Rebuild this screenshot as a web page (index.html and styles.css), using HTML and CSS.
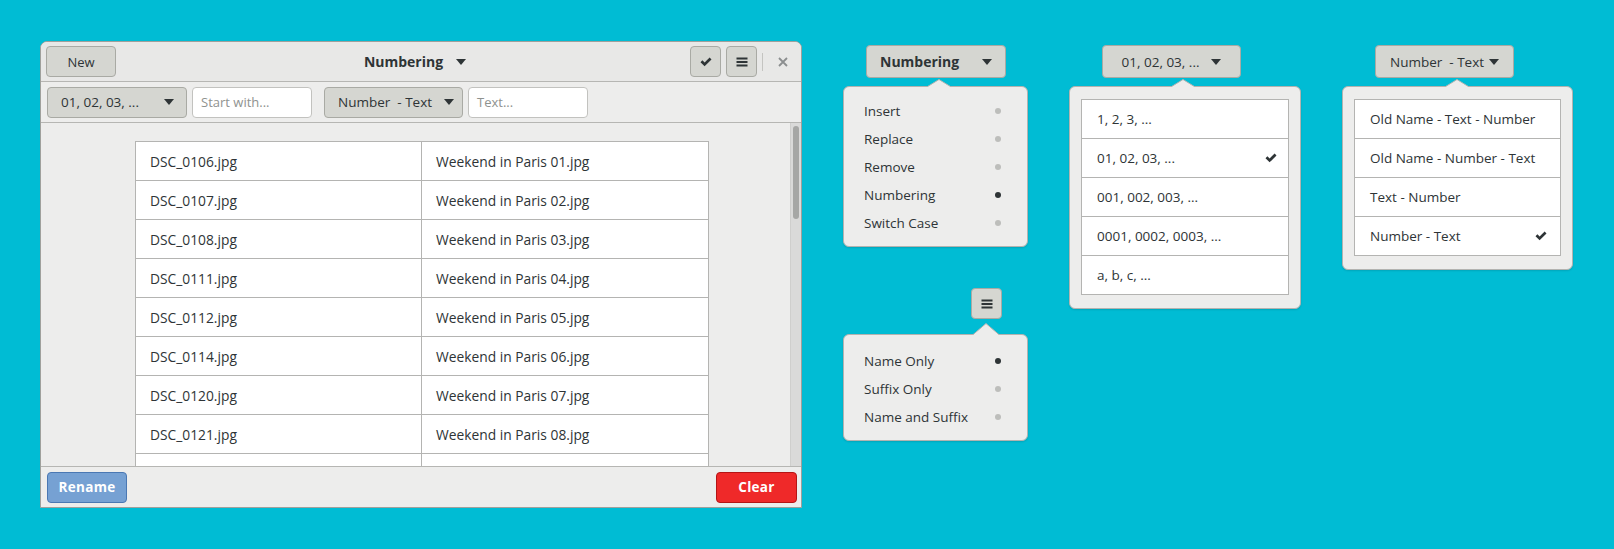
FILE: index.html
```html
<!DOCTYPE html>
<html>
<head>
<meta charset="utf-8">
<link rel="stylesheet" href="styles.css">
</head>
<body>
<div class="stage">
  <div class="window">
    <header class="headerbar">
      <div class="hb-left"><button class="btn btn-new">New</button></div>
      <div class="hb-title">Numbering <svg class="tri" width="10" height="6" viewBox="0 0 10 6"><path d="M0 0h10L5 6z"/></svg></div>
      <div class="hb-right">
        <button class="btn btn-icon"><svg width="12" height="10" viewBox="0 0 12 10"><path d="M0.5 5.2l1.9-1.9 2.2 2.2L9.6 0.5l1.9 1.9-6.9 6.9z"/></svg></button>
        <button class="btn btn-icon"><svg width="12" height="10" viewBox="0 0 12 10"><path d="M0.5 0.5h11v2h-11zM0.5 4h11v2h-11zM0.5 7.5h11v2h-11z"/></svg></button>
        <span class="sep"></span>
        <span class="close"><svg width="10" height="10" viewBox="0 0 10 10"><path d="M1 1l8 8M9 1l-8 8" stroke="#8b8e8f" stroke-width="1.8"/></svg></span>
      </div>
    </header>
    <div class="toolbar">
      <button class="btn combo combo-num">01, 02, 03, ... <svg class="tri" width="10" height="6" viewBox="0 0 10 6"><path d="M0 0h10L5 6z"/></svg></button>
      <div class="entry">Start with...</div>
      <button class="btn combo combo-fmt">Number&nbsp; - Text <svg class="tri" width="10" height="6" viewBox="0 0 10 6"><path d="M0 0h10L5 6z"/></svg></button>
      <div class="entry">Text...</div>
    </div>
    <div class="content">
      <div class="scroll-area">
        <div class="filetable">
          <div class="row"><div class="cell">DSC_0106.jpg</div><div class="cell">Weekend in Paris 01.jpg</div></div>
          <div class="row"><div class="cell">DSC_0107.jpg</div><div class="cell">Weekend in Paris 02.jpg</div></div>
          <div class="row"><div class="cell">DSC_0108.jpg</div><div class="cell">Weekend in Paris 03.jpg</div></div>
          <div class="row"><div class="cell">DSC_0111.jpg</div><div class="cell">Weekend in Paris 04.jpg</div></div>
          <div class="row"><div class="cell">DSC_0112.jpg</div><div class="cell">Weekend in Paris 05.jpg</div></div>
          <div class="row"><div class="cell">DSC_0114.jpg</div><div class="cell">Weekend in Paris 06.jpg</div></div>
          <div class="row"><div class="cell">DSC_0120.jpg</div><div class="cell">Weekend in Paris 07.jpg</div></div>
          <div class="row"><div class="cell">DSC_0121.jpg</div><div class="cell">Weekend in Paris 08.jpg</div></div>
          <div class="row"><div class="cell"></div><div class="cell"></div></div>
        </div>
      </div>
      <div class="scrollbar"><div class="thumb"></div></div>
    </div>
    <footer class="actionbar">
      <button class="btn suggested">Rename</button>
      <button class="btn destructive">Clear</button>
    </footer>
  </div>

  <div class="col col-modes">
    <button class="btn pop-btn mode-btn">Numbering <svg class="tri" width="10" height="6" viewBox="0 0 10 6"><path d="M0 0h10L5 6z"/></svg></button>
    <div class="popover pop-modes">
      <svg class="arrow arrow-a" width="26" height="8" viewBox="0 0 26 8"><polygon points="0,8.5 13,0.5 26,8.5" fill="#ededec"/><polyline points="0,8.5 13,0.5 26,8.5" fill="none" stroke="#b3b3b0"/></svg>
      <div class="item">Insert<span class="dot"></span></div>
      <div class="item">Replace<span class="dot"></span></div>
      <div class="item">Remove<span class="dot"></span></div>
      <div class="item">Numbering<span class="dot on"></span></div>
      <div class="item">Switch Case<span class="dot"></span></div>
    </div>
    <button class="btn btn-icon burger"><svg width="12" height="10" viewBox="0 0 12 10"><path d="M0.5 0.5h11v2h-11zM0.5 4h11v2h-11zM0.5 7.5h11v2h-11z"/></svg></button>
    <div class="popover pop-apply">
      <svg class="arrow arrow-b" width="28" height="12" viewBox="0 0 28 12"><polygon points="0,12.5 14,0.5 28,12.5" fill="#ededec"/><polyline points="0,12.5 14,0.5 28,12.5" fill="none" stroke="#b3b3b0"/></svg>
      <div class="item">Name Only<span class="dot on"></span></div>
      <div class="item">Suffix Only<span class="dot"></span></div>
      <div class="item">Name and Suffix<span class="dot"></span></div>
    </div>
  </div>

  <div class="col col-num">
    <button class="btn pop-btn combo-pop">01, 02, 03, ... <svg class="tri" width="10" height="6" viewBox="0 0 10 6"><path d="M0 0h10L5 6z"/></svg></button>
    <div class="popover pop-list pop-num">
      <svg class="arrow arrow-c" width="26" height="8" viewBox="0 0 26 8"><polygon points="0,8.5 13,0.5 26,8.5" fill="#ededec"/><polyline points="0,8.5 13,0.5 26,8.5" fill="none" stroke="#b3b3b0"/></svg>
      <div class="list">
        <div class="lrow">1, 2, 3, ...</div>
        <div class="lrow">01, 02, 03, ...<svg class="check" width="12" height="10" viewBox="0 0 12 10"><path d="M0.5 5.2l1.9-1.9 2.2 2.2L9.6 0.5l1.9 1.9-6.9 6.9z"/></svg></div>
        <div class="lrow">001, 002, 003, ...</div>
        <div class="lrow">0001, 0002, 0003, ...</div>
        <div class="lrow">a, b, c, ...</div>
      </div>
    </div>
  </div>

  <div class="col col-fmt">
    <button class="btn pop-btn combo-pop">Number&nbsp; - Text <svg class="tri" width="10" height="6" viewBox="0 0 10 6"><path d="M0 0h10L5 6z"/></svg></button>
    <div class="popover pop-list pop-fmt">
      <svg class="arrow arrow-d" width="26" height="8" viewBox="0 0 26 8"><polygon points="0,8.5 13,0.5 26,8.5" fill="#ededec"/><polyline points="0,8.5 13,0.5 26,8.5" fill="none" stroke="#b3b3b0"/></svg>
      <div class="list">
        <div class="lrow">Old Name - Text - Number</div>
        <div class="lrow">Old Name - Number - Text</div>
        <div class="lrow">Text - Number</div>
        <div class="lrow">Number - Text<svg class="check" width="12" height="10" viewBox="0 0 12 10"><path d="M0.5 5.2l1.9-1.9 2.2 2.2L9.6 0.5l1.9 1.9-6.9 6.9z"/></svg></div>
      </div>
    </div>
  </div>
</div>
</body>
</html>
```

FILE: styles.css
```css
* { box-sizing: border-box; }
html, body { margin: 0; padding: 0; }
body {
  background: #00bcd4;
  font-family: "Open Sans", "DejaVu Sans", sans-serif;
  font-size: 13px;
  color: #2e3436;
  width: 1614px;
  height: 549px;
  overflow: hidden;
}
.stage {
  display: flex;
  align-items: flex-start;
  gap: 41px;
  padding: 41px 0 0 40px;
}
svg { display: block; }
.tri path { fill: #2e3436; }

.btn {
  font: inherit;
  color: #2e3436;
  background: #d5d6d1;
  border: 1px solid #a9aaa4;
  border-radius: 4px;
  height: 31px;
  padding: 0;
  display: inline-flex;
  align-items: center;
  justify-content: center;
  cursor: default;
}
.btn-icon { width: 31px; }
.btn-icon svg path { fill: #2e3436; }

/* window */
.window {
  width: 762px;
  height: 467px;
  border: 1px solid #9fa09c;
  border-radius: 7px 7px 0 0;
  background: #ededec;
  display: flex;
  flex-direction: column;
  overflow: hidden;
}
.headerbar {
  height: 40px;
  flex: none;
  background: #e8e8e7;
  border-bottom: 1px solid #b6b6b3;
  display: grid;
  grid-template-columns: 1fr auto 1fr;
  align-items: center;
  padding: 0 5px 0 5px;
}
.btn-new { width: 70px; }
.hb-title {
  display: flex;
  align-items: center;
  gap: 13px;
  font-weight: 700;
  font-size: 14px;
  margin-right: 12px;
}
.hb-right {
  display: flex;
  align-items: center;
  justify-content: flex-end;
  gap: 5px;
}
.sep {
  width: 1px;
  height: 18px;
  background: #c4c4c1;
}
.close {
  width: 26px;
  margin-left: 2px;
  display: flex;
  justify-content: center;
}
.toolbar {
  height: 41px;
  flex: none;
  border-bottom: 1px solid #b6b6b3;
  display: flex;
  align-items: center;
  gap: 5px;
  padding: 0 0 0 6px;
}
.combo { gap: 0; justify-content: space-between; }
.combo-num { width: 140px; padding: 0 12px 0 13px; font-size: 13.5px; }
.combo-fmt { width: 139px; padding: 0 8px 0 13px; margin-left: 7px; font-size: 13.5px; }
.entry {
  width: 120px;
  height: 31px;
  background: #fff;
  border: 1px solid #c2c2bf;
  border-radius: 4px;
  display: flex;
  align-items: center;
  padding-left: 8px;
  color: #8f928f;
}
.content {
  flex: 1;
  display: flex;
  min-height: 0;
}
.scroll-area {
  flex: 1;
  overflow: hidden;
  padding: 18px 0 0 94px;
}
.filetable {
  width: 574px;
  border-top: 1px solid #b4b4b2;
  border-left: 1px solid #b4b4b2;
  background: #fff;
}
.row {
  display: grid;
  grid-template-columns: 286px 287px;
}
.cell {
  height: 39px;
  border-right: 1px solid #b4b4b2;
  border-bottom: 1px solid #b4b4b2;
  display: flex;
  align-items: center;
  padding-left: 14px;
  font-size: 13.8px;
}
.scrollbar {
  width: 11px;
  flex: none;
  background: #dadad9;
  border-left: 1px solid #cfcfcd;
  padding: 3px 2px 0 2px;
}
.thumb {
  width: 6px;
  height: 93px;
  border-radius: 3px;
  background: #a6a7a5;
}
.actionbar {
  height: 41px;
  flex: none;
  border-top: 1px solid #b6b6b3;
  display: flex;
  align-items: center;
  justify-content: space-between;
  padding: 0 4px 0 6px;
}
.suggested {
  width: 80px;
  background: #76a1d3;
  border-color: #4a78b3;
  color: #fff;
  font-weight: 700;
  font-size: 13.5px;
  letter-spacing: 0.3px;
}
.destructive {
  width: 81px;
  background: #ef2929;
  border-color: #b51515;
  color: #fff;
  font-weight: 700;
  font-size: 13.5px;
  letter-spacing: 0.3px;
}

/* popovers */
.col {
  display: flex;
  flex-direction: column;
  align-items: flex-start;
}
.col-modes { width: 185px; padding-top: 4px; }
.col-num { width: 232px; padding-top: 4px; }
.col-fmt { width: 231px; padding-top: 4px; }
.pop-btn { height: 33px; }
.mode-btn {
  width: 140px;
  margin-left: 23px;
  font-weight: 700;
  font-size: 14px;
  gap: 0;
  justify-content: space-between;
  padding: 0 13px 0 13px;
}
.combo-pop {
  width: 139px;
  margin-left: 33px;
  justify-content: center;
  gap: 12px;
  font-size: 13.5px;
}
.col-fmt .combo-pop { gap: 5px; }
.popover {
  position: relative;
  background: #ededec;
  border: 1px solid #b3b3b0;
  border-radius: 6px;
  box-shadow: 0 1px 2px rgba(0,0,0,0.12);
  margin-top: 8px;
}
.arrow { position: absolute; top: -8px; }
.arrow-a { left: 82px; }
.arrow-b { left: 128px; top: -12px; }
.arrow-c { left: 100px; }
.arrow-d { left: 101px; }
.pop-modes { width: 185px; padding: 10px 0 9px; }
.pop-apply { width: 185px; padding: 12px 0 9px; margin-top: 15px; }
.burger { margin-left: 128px; margin-top: 41px; }
.item {
  height: 28px;
  display: flex;
  align-items: center;
  justify-content: space-between;
  padding: 0 26px 0 20px;
  font-size: 13.5px;
}
.dot {
  width: 6px;
  height: 6px;
  border-radius: 50%;
  background: #bdbebb;
}
.dot.on { background: #2e3436; }
.pop-list { padding: 12px 11px 13px 11px; }
.pop-num { width: 232px; }
.pop-fmt { width: 231px; padding-bottom: 13px; }
.list {
  background: #fff;
  border: 1px solid #b4b4b2;
}
.lrow {
  height: 39px;
  border-bottom: 1px solid #b4b4b2;
  display: flex;
  align-items: center;
  justify-content: space-between;
  padding: 0 11px 0 15px;
  font-size: 13.5px;
}
.lrow:last-child { border-bottom: none; height: 38px; }
.pop-fmt .lrow { padding: 0 13px 0 15px; }
.check path { fill: #2e3436; }
```
